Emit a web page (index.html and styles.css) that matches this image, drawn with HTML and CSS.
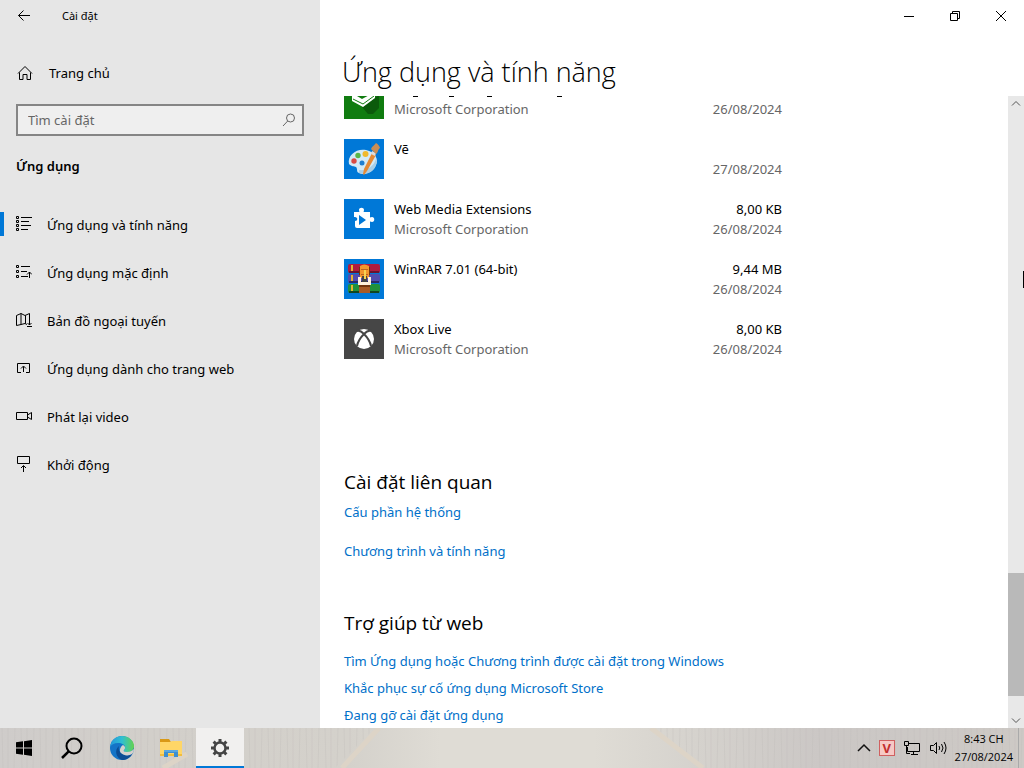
FILE: index.html
```html
<!DOCTYPE html>
<html lang="vi">
<head>
<meta charset="utf-8">
<meta name="viewport" content="width=device-width, initial-scale=1">
<title>Cài đặt</title>
<link rel="stylesheet" href="styles.css">
</head>
<body>
<div class="window">
  <aside class="sidebar">
    <header class="side-title">
      <button class="back" aria-label="Quay lại"><svg width="16" height="16" viewBox="0 0 16 16"><path d="M14 7.500H2.500M7.500 2.500l-5 5 5 5" class="line"/></svg></button>
      <span class="app-name">Cài đặt</span>
    </header>
    <a class="home" href="#"><svg width="16" height="16" viewBox="0 0 16 16"><path d="M1 8.500L8 1.500l7 7M2.500 7.500v7h3.500v-5h4v5h3.500v-7" class="line"/></svg><span>Trang chủ</span></a>
    <div class="search">
      <input type="search" aria-label="Tìm cài đặt" placeholder="Tìm cài đặt">
      <svg width="14" height="14" viewBox="0 0 14 14"><circle cx="8.500" cy="5" r="4" class="line"/><path d="M5.700 8L1 13" class="line"/></svg>
    </div>
    <h2 class="group">Ứng dụng</h2>
    <nav class="nav">
      <a class="nav-item current" href="#"><svg width="16" height="16" viewBox="0 0 16 16"><path d="M.5.500h2v2h-2zM.5 4.500h2v2h-2zM.5 8.500h2v2h-2zM.5 12.500h2v2h-2zM5 1.500h11M5 5.500h8M5 9.500h10M5 13.500h7" class="line"/></svg><span>Ứng dụng và tính năng</span></a>
      <a class="nav-item" href="#"><svg width="16" height="16" viewBox="0 0 16 16"><path d="M.5 1.500h2v2h-2zM.5 6.500h2v2h-2zM.5 11.500h2v2h-2zM5 2.500h9M5 7.500h6M5 12.500h7M13.500 14V8M11 10.500l2.500-2.500 2.500 2.500" class="line"/></svg><span>Ứng dụng mặc định</span></a>
      <a class="nav-item" href="#"><svg width="16" height="16" viewBox="0 0 16 16"><path d="M11 12.500l-2-1-4 1-4.500 1v-10l4.500-2 4 2 4.500-2v6M5 1.500v11M9.500 3.500v8M13.500 7v6M11.500 11l2 2 2-2M11 14.500h5" class="line"/></svg><span>Bản đồ ngoại tuyến</span></a>
      <a class="nav-item" href="#"><svg width="16" height="16" viewBox="0 0 16 16"><path d="M5 12.500H1.500v-9h12v9H10M7.500 12V6.500M5 8.500l2.500-2.500L10 8.500" class="line"/></svg><span>Ứng dụng dành cho trang web</span></a>
      <a class="nav-item" href="#"><svg width="16" height="16" viewBox="0 0 16 16"><path d="M.5 4.500h11v7H.5zM11.500 7l4-2.500v7l-4-2.500" class="line"/></svg><span>Phát lại video</span></a>
      <a class="nav-item" href="#"><svg width="16" height="16" viewBox="0 0 16 16"><path d="M1.500.500h12v7h-12zM7.500 16v-6M5 12l2.500-2.500L10 12" class="line"/></svg><span>Khởi động</span></a>
    </nav>
  </aside>

  <main class="main">
    <header class="caption">
      <button aria-label="Thu nhỏ"><svg width="12" height="12" viewBox="0 0 12 12"><path d="M1 6.500h10" class="line"/></svg></button>
      <button aria-label="Khôi phục"><svg width="12" height="12" viewBox="0 0 12 12"><path d="M1.500 3.500h7v7h-7zM3.500 3.500v-2h7v7h-2" class="line"/></svg></button>
      <button aria-label="Đóng"><svg width="12" height="12" viewBox="0 0 12 12"><path d="M1 1l10 10M11 1L1 11" class="line"/></svg></button>
    </header>
    <h1>Ứng dụng và tính năng</h1>
    <div class="viewport">
      <div class="content">
        <ul class="apps">
          <li class="app">
            <svg class="tile" viewBox="0 0 40 40"><path fill="#107c10" d="M0 0h40v40H0z"/><path fill="#0b5a0b" d="M18 28l17-12v13l-6 6h-5z"/><path fill="#fff" d="M8 14l10 6 13-7v6l-12 9-11-6z"/><path d="M9 20l10 5 11-8" fill="none" stroke="#107c10"/></svg>
            <div class="info"><svg width="180" height="20" viewBox="0 0 180 20"><path d="M19 17.500h5M55 17.500h5M93 17.500h5M163 17.500h5" class="line"/></svg><span class="muted">Microsoft Corporation</span></div>
            <div class="meta"><span></span><span class="muted">26/08/2024</span></div>
          </li>
          <li class="app">
            <svg class="tile" viewBox="0 0 40 40"><path fill="#0078d7" d="M0 0h40v40H0z"/><path fill="#d3eaf7" d="M5 25C3 16 13 9 22 11c9 2 13 9 10 15-3 7-11 11-17 8-3-1-1-4-3-6-2-1-4 0-7-3z"/><path fill="#a9cfe8" d="M15 34c7 3 15-1 17-8 1-2 1-4 0-6-2 7-9 12-17 11z"/><circle cx="18" cy="24" r="2.500" fill="#1f7fd0"/><circle cx="10" cy="22" r="2.700" fill="#d94b45"/><circle cx="14" cy="16.500" r="2.700" fill="#57b648"/><circle cx="21.500" cy="15" r="3" fill="#f0b92c"/><path fill="#e58a35" d="M28 14l4 2-9 16-3 4-1-1 1-5z"/><path fill="#ddd" d="M28 12l4 2-1 3-4-2z"/><path fill="#c98d56" d="M27 10c1-3 4-4 5-6 2 1 4 4 4 5-2 1-2 5-4 6z"/></svg>
            <div class="info"><span>Vẽ</span></div>
            <div class="meta"><span></span><span class="muted">27/08/2024</span></div>
          </li>
          <li class="app">
            <svg class="tile" viewBox="0 0 40 40"><path fill="#0078d7" d="M0 0h40v40H0z"/><path fill="#fff" d="M10 13h5c1 0 0-1 0-2 0-3 5-3 5 0 0 1-1 2 0 2h6v5c0 1 1 0 2 0 3 0 3 5 0 5-1 0-2-1-2 0v6H13q-2 0-2-2v-5c3 0 3-4 0-4h-1z"/><path fill="#0078d7" d="M15 16l7 5-7 5z"/></svg>
            <div class="info"><span>Web Media Extensions</span><span class="muted">Microsoft Corporation</span></div>
            <div class="meta"><span>8,00 KB</span><span class="muted">26/08/2024</span></div>
          </li>
          <li class="app">
            <svg class="tile" viewBox="0 0 40 40"><path fill="#0078d7" d="M0 0h40v40H0z"/><rect x="4" y="5" width="32" height="9" rx="2" fill="#b01c3e"/><path fill="#6a1430" d="M5 12h30v2H5z"/><rect x="4" y="15" width="32" height="9" rx="2" fill="#514cae"/><path fill="#2c2a66" d="M5 22h30v2H5z"/><rect x="4" y="25" width="32" height="9" rx="2" fill="#21903b"/><path fill="#10461f" d="M5 32h30v2H5z"/><path fill="#e5b431" d="M7 6h2v6H7zM7 16h2v6H7zM7 26h2v6H7z"/><path fill="#a85a26" d="M15 26h11v8H15z"/><path fill="#71340e" d="M15 26h11v2H15zM15 8h2v8h-2zM24 8h2v8h-2z"/><path fill="#f2962e" d="M16 7q4-3 9 0v12h-9z"/><path fill="#bd6420" d="M17 10h7v1h-7zM17 15h7v1h-7z"/><path fill="#fff0dc" d="M14 18h3v5h7v-5h3v8H14z"/><path fill="#444" d="M18 17h5v6h-5z"/><path fill="#f8d252" d="M20 11h2v9h-2z"/></svg>
            <div class="info"><span>WinRAR 7.01 (64-bit)</span></div>
            <div class="meta"><span>9,44 MB</span><span class="muted">26/08/2024</span></div>
          </li>
          <li class="app">
            <svg class="tile" viewBox="0 0 40 40"><path fill="#464646" d="M0 0h40v40H0z"/><circle cx="20" cy="20" r="10" fill="#fff"/><path d="M13 12c3-1 5 1 7 3 2-2 4-4 7-3M20 15c-3 3-6 7-7 12M20 15c3 3 6 7 7 12" fill="none" stroke="#464646" stroke-width="2"/></svg>
            <div class="info"><span>Xbox Live</span><span class="muted">Microsoft Corporation</span></div>
            <div class="meta"><span>8,00 KB</span><span class="muted">26/08/2024</span></div>
          </li>
        </ul>
        <section class="related">
          <h2>Cài đặt liên quan</h2>
          <a href="#">Cấu phần hệ thống</a>
          <a href="#">Chương trình và tính năng</a>
        </section>
        <section class="help">
          <h2>Trợ giúp từ web</h2>
          <a href="#">Tìm Ứng dụng hoặc Chương trình được cài đặt trong Windows</a>
          <a href="#">Khắc phục sự cố ứng dụng Microsoft Store</a>
          <a href="#">Đang gỡ cài đặt ứng dụng</a>
        </section>
      </div>
      <div class="scrollbar">
        <button aria-label="Cuộn lên"><svg width="10" height="10" viewBox="0 0 10 10"><path d="M1 6.500l4-4 4 4" class="line"/></svg></button>
        <div class="track"><div class="thumb"></div></div>
        <button aria-label="Cuộn xuống"><svg width="10" height="10" viewBox="0 0 10 10"><path d="M1 3.500l4 4 4-4" class="line"/></svg></button>
        <i class="pointer"></i>
      </div>
    </div>
  </main>
</div>

<footer class="taskbar">
  <svg class="scene" viewBox="0 0 1024 40" preserveAspectRatio="none">
    <defs>
      <linearGradient id="ground"><stop offset="0" stop-color="#cfccca"/><stop offset=".15" stop-color="#d2cfca"/><stop offset=".34" stop-color="#d4d1cb"/><stop offset=".43" stop-color="#dfdcd5"/><stop offset=".58" stop-color="#dfdcd5"/><stop offset=".68" stop-color="#d5d2cd"/><stop offset=".8" stop-color="#cbc7c5"/><stop offset="1" stop-color="#cdc9c5"/></linearGradient>
      <pattern id="grain" width="19" height="40" patternUnits="userSpaceOnUse"><path d="M2 0l1 40M8 0v40M15 0l-1 40" stroke="#bfbab6" stroke-opacity=".3"/></pattern>
    </defs>
    <path fill="url(#ground)" d="M0 0h1024v40H0z"/>
    <path fill="url(#grain)" d="M0 0h375L335 40H0zM655 0h369v40H705z"/>
    <path d="M379 0l-37 40M651 0l52 40M187 26l-24 14" stroke="#ddd4c7" stroke-width="5"/>
  </svg>
  <div class="launchers">
    <button aria-label="Bắt đầu"><svg width="16" height="16" viewBox="0 0 16 16"><path d="M0 2.300L7 1.300v6.200H0zM8 1.200L16 0v7.500H8zM0 8.500h7v6.200l-7-1zM8 8.500h8V16l-8-1.200z"/></svg></button>
    <button aria-label="Tìm kiếm"><svg width="24" height="24" viewBox="0 0 24 24"><circle cx="13" cy="10" r="7.500" fill="none" stroke="#000" stroke-width="2"/><path d="M7.700 15.300L1 22" stroke="#000" stroke-width="2.500"/></svg></button>
    <button aria-label="Microsoft Edge"><svg width="24" height="24" viewBox="0 0 24 24"><defs><linearGradient id="edge"><stop stop-color="#2498db"/><stop offset=".5" stop-color="#30bfd1"/><stop offset="1" stop-color="#65d34d"/></linearGradient></defs><circle cx="12" cy="12" r="12" fill="#1474c7"/><path fill="url(#edge)" d="M0 11C1 4 6 0 12 0c7 0 12 5 12 10 0 4-3 6-7 6-3 0-4-1-3-2 1-1 1-2 1-3 0-2-3-4-7-4-4 0-7 2-8 4z"/><path fill="#0c4c93" d="M9 10c-5 4-3 12 3 14 4 0 8-2 10-6-3 2-8 2-11-1-2-2-3-4-2-7z"/><path fill="#d5d1cc" d="M13 9c2 1 3 3 1 5-1 1 0 2 3 2 3 0 5-1 7-3 0 2-1 4-2 5-3 2-8 2-11-1-2-2-1-6 2-8z"/></svg></button>
    <button aria-label="File Explorer"><svg width="22" height="20" viewBox="0 0 22 20"><path fill="#d99916" d="M0 1h9l2 3H0z"/><path fill="#ffd667" d="M0 4h10l2-1h10v15H0z"/><path fill="#f2bd3d" d="M0 16h22v2H0z"/><path fill="#3e8fd0" d="M4 12h14v7h-4v-4H8v4H4z"/><path fill="#5aa7e0" d="M4 12h14v2H4z"/></svg></button>
    <button class="active" aria-label="Cài đặt"><svg width="20" height="20" viewBox="0 0 20 20" fill="none" stroke="#444"><circle cx="10" cy="10" r="5.500" stroke-width="2.500"/><path stroke-width="3" d="M10 1v3M10 16v3M1 10h3M16 10h3M3.600 3.600l2.200 2.200M14.200 14.200l2.200 2.200M16.400 3.600l-2.200 2.200M5.800 14.200l-2.200 2.200"/></svg></button>
  </div>
  <div class="tray">
    <button aria-label="Biểu tượng ẩn"><svg width="14" height="16" viewBox="0 0 14 16"><path d="M1 11l6-6 6 6" fill="none" stroke="#111" stroke-width="1.500"/></svg></button>
    <button class="unikey" aria-label="Bộ gõ tiếng Việt">V</button>
    <button aria-label="Mạng"><svg width="18" height="16" viewBox="0 0 18 16"><path d="M6 3.500h10.500v8H4.500V7M8 14.500h7M10.500 11.500v3M1.500 1.500h4v4h-4zM3.500 5.500v8H7" class="line"/></svg></button>
    <button aria-label="Âm lượng"><svg width="18" height="16" viewBox="0 0 18 16"><path d="M1.500 5.500h3l3-3v11l-3-3h-3zM10 6q1.500 2 0 4M12.500 4q3 4 0 8M15 2q4 6 0 12" class="line"/></svg></button>
    <time class="clock" datetime="2024-08-27T20:43"><span>8:43 CH</span><span>27/08/2024</span></time>
  </div>
</footer>
</body>
</html>
```
FILE: styles.css
```css
* { box-sizing: border-box; }

body {
  margin: 0;
  min-height: 100vh;
  height: 100vh;
  display: flex;
  flex-direction: column;
  overflow: hidden;
  background: #fff;
  color: #000;
  font: 13px/20px "Noto Sans", "Open Sans", sans-serif;
}

h1, h2, ul { margin: 0; padding: 0; font-weight: 400; }
a { color: inherit; text-decoration: none; }
svg { display: block; flex: none; }
button {
  display: flex;
  align-items: center;
  justify-content: center;
  padding: 0;
  border: 0;
  background: none;
  color: inherit;
  font: inherit;
}
.line { fill: none; stroke: currentColor; stroke-width: 1; }

.window { flex: 1; min-height: 0; display: flex; }

.sidebar { flex: none; width: 320px; background: #e6e6e6; }
.side-title { display: flex; align-items: center; height: 32px; }
.back { width: 48px; height: 32px; }
.app-name { padding-left: 14px; font-size: 11px; }
.home { display: flex; align-items: center; gap: 16px; height: 48px; margin-top: 16px; padding: 2px 17px 0; }
.search {
  display: flex;
  align-items: center;
  height: 32px;
  margin: 8px 16px 0;
  padding: 0 6px 0 10px;
  border: 2px solid #858585;
  background: #efefef;
  color: #666;
}
.search input { flex: 1; min-width: 0; padding: 0; border: 0; outline: 0; background: none; font: inherit; }
.search input::placeholder { color: #666; opacity: 1; }
.group { margin: 20px 16px 0; font-size: 13px; font-weight: 600; }
.nav { margin-top: 24px; }
.nav-item { display: flex; align-items: center; gap: 15px; height: 48px; padding-left: 12px; border-left: 4px solid transparent; }
.nav-item span { padding-top: 2px; }
.current { border-image: linear-gradient(transparent 12px, #0078d7 12px, #0078d7 36px, transparent 36px) 0 0 0 4; }

.main { flex: 1; min-width: 0; display: flex; flex-direction: column; }
.caption { display: flex; justify-content: flex-end; height: 32px; }
.caption button { width: 46px; }
h1 { padding: 20px 22px 0; height: 64px; font-family: "Open Sans", "Noto Sans", sans-serif; font-size: 27px; line-height: 40px; font-weight: 300; }
.viewport { flex: 1; min-height: 0; display: flex; overflow: hidden; }
.content { flex: 1; min-width: 0; margin-top: -17px; padding-left: 24px; }
.apps { display: grid; gap: 20px; max-width: 438px; list-style: none; }
.app { display: flex; gap: 10px; height: 40px; }
.tile { width: 40px; height: 40px; }
.info, .meta { display: grid; grid-template-rows: 20px 20px; }
.info { flex: 1; }
.meta { text-align: right; }
.muted { color: #666; }

.related, .help { display: flex; flex-direction: column; align-items: flex-start; color: #0070c9; }
.related h2, .help h2 { color: #000; font-family: "Open Sans", "Noto Sans", sans-serif; font-size: 19px; line-height: 28px; }
.related { margin-top: 109px; gap: 19px; }
.related h2 { margin-bottom: -13px; }
.help { margin-top: 48px; gap: 7px; }
.help h2 { margin-bottom: 7px; }

.scrollbar { position: relative; display: flex; flex-direction: column; width: 16px; background: #e8e8e8; color: #555; }
.scrollbar button { height: 16px; }
.track { flex: 1; display: flex; flex-direction: column; justify-content: flex-end; padding-bottom: 16px; }
.thumb { height: 21%; background: #b9b9b9; }
.pointer { position: absolute; top: 175px; right: 0; width: 1px; height: 17px; background: #000; }

.taskbar { position: relative; flex: none; display: flex; justify-content: space-between; height: 40px; font-family: "Open Sans", "Noto Sans", sans-serif; }
.scene { position: absolute; inset: 0; width: 100%; height: 100%; z-index: -1; }
.launchers { display: flex; gap: 1px; }
.launchers button { width: 48px; }
.launchers .active { background: #f1f0ef; border-bottom: 2px solid #0078d7; padding-top: 2px; }
.tray { display: flex; align-items: center; gap: 8px; padding-right: 5px; border-right: 1px solid #aaa; margin-right: 5px; }
.tray .unikey { width: 16px; height: 16px; border: 1px solid #d06060; background: #f6c9c5; color: #c22f2f; font-size: 13px; line-height: 14px; font-weight: 700; }
.clock { display: flex; flex-direction: column; align-items: center; font-size: 11px; line-height: 18px; }
```
